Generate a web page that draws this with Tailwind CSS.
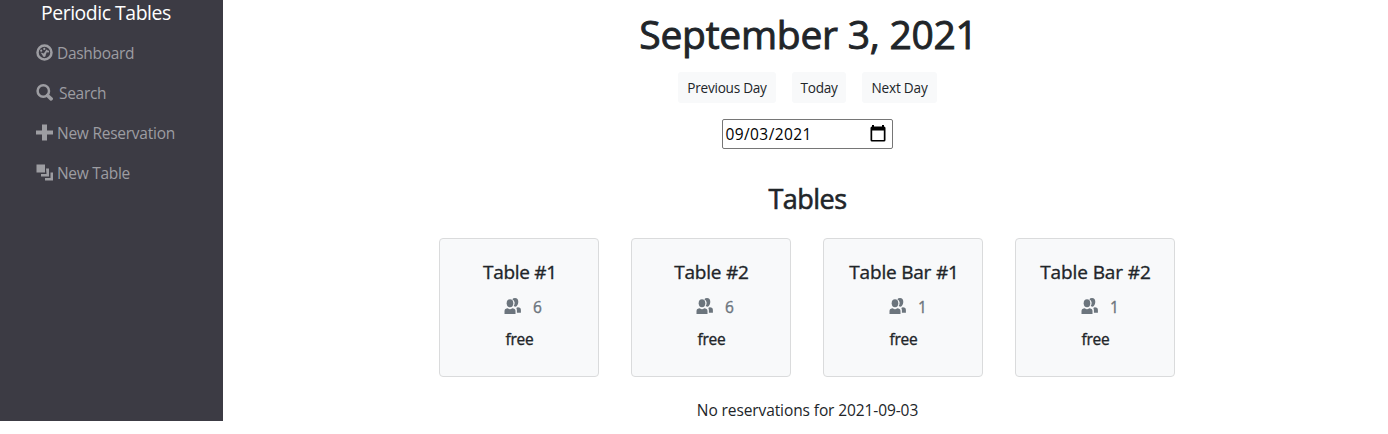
<!DOCTYPE html>
<html lang="en">
<head>
<meta charset="utf-8">
<title>Periodic Tables</title>
<script src="https://cdn.jsdelivr.net/npm/@tailwindcss/browser@4"></script>
</head>
<body class="bg-white text-[#212529] font-['Open_Sans','Noto_Sans',sans-serif] text-[15.5px] overflow-hidden">
<svg class="hidden">
  <symbol id="people" viewBox="0 0 17 16"><ellipse cx="6" cy="5.3" rx="3.3" ry="4"/><path d="M0.5 16v-3.2q0-1.800 2-2.200l1.300-.3q2.200 2 4.400 0l1.300.3q2 .4 2 2.200V16zM8.300 1.200Q9.200 0 11 0q3.300 0 3.300 4 0 2.200-1.300 3.700-.7.9-1.800 1.100L9.700 8q1.200-1.600.9-3.700-.4-2-2.300-3.100zM12.300 10l1.400-.8 1.500.4q1.700.5 1.700 2.200v3h-4v-2.400q0-1.500-.6-2.400z"/></symbol>
</svg>
<div class="flex items-start">
  <nav class="w-[223px] h-[421px] shrink-0 bg-[#3c3b44]">
    <div class="h-[33px] pl-[41px] leading-[26px] text-[19.4px] text-white whitespace-nowrap"><span class="tracking-[-0.45px]">Periodic Tables</span></div>
    <ul class="pl-[36px] text-[#9d9da2] fill-[#9d9da2]">
      <li class="h-10 flex items-center"><svg class="w-[17px] h-[17px] mr-[4px] -mt-[2px]" viewBox="0 0 17 17"><circle cx="8.500" cy="8.500" r="7" fill="none" stroke="#9d9da2" stroke-width="2.500"/><circle cx="5.200" cy="6.700" r="1.100"/><circle cx="8.300" cy="4.900" r="1.100"/><circle cx="12" cy="7.600" r="1.100"/><path d="M4.600 8.500l3.200 1 2.700-4 1.200.7-1.900 4.400q.2 2.400-1.500 2.400-1.600 0-1.800-1.700z"/></svg><span class="pt-[2px] tracking-[-0.3px]">Dashboard</span></li>
      <li class="h-10 flex items-center"><svg class="w-[17px] h-[17px] mr-[6px] -mt-[2px]" viewBox="0 0 17 17"><circle cx="7.300" cy="7" r="5.700" fill="none" stroke="#9d9da2" stroke-width="2.500"/><path d="M11.500 11.500l3.600 3.300" stroke="#9d9da2" stroke-width="3.600" stroke-linecap="round"/></svg><span class="pt-[2px] tracking-[-0.3px]">Search</span></li>
      <li class="h-10 flex items-center"><svg class="w-[17px] h-[17px] mr-[4px] -mt-[2px]" viewBox="0 0 17 17"><path d="M6 .5h5v6h6v4h-6v6H6v-6H0v-4h6z"/></svg><span class="pt-[2px] tracking-[-0.25px]">New Reservation</span></li>
      <li class="h-10 flex items-center"><svg class="w-[17px] h-[17px] mr-[4px] -mt-[2px]" viewBox="0 0 17 17"><path d="M.5.500H9v8H.5zM10 4.500h3v8H5V10h5.500zM14.500 8.500H17v8H9V14h5.500z"/></svg><span class="pt-[2px] tracking-[-0.3px]">New Table</span></li>
    </ul>
  </nav>
  <main class="w-[1168px] shrink-0 flex flex-col items-center whitespace-nowrap">
    <h1 class="mt-[10px] h-12 pl-[3px] leading-[48px] text-[39px] [-webkit-text-stroke:0.9px_#212529]"><span class="tracking-[-0.25px]">September 3, 2021</span></h1>
    <div class="mt-[14px] flex gap-4 text-[13.6px]">
      <button class="w-[98px] h-[31px] pt-[2px] pl-px rounded-[3px] bg-[#f8f9fa]"><span class="tracking-[-0.25px]">Previous Day</span></button>
      <button class="w-[54px] h-[31px] pt-[2px] pl-px rounded-[3px] bg-[#f8f9fa]"><span class="tracking-[-0.3px]">Today</span></button>
      <button class="w-[75px] h-[31px] pt-[2px] pl-px rounded-[3px] bg-[#f8f9fa]"><span class="tracking-[-0.2px]">Next Day</span></button>
    </div>
    <div class="mt-4 w-[171px] h-[30px] border border-[#767676] rounded-[2px] pl-[3px] pr-[6px] flex items-center justify-between text-black"><span class="pt-[2px] tracking-[0.4px]">09/03/2021</span><svg class="w-4 h-[17px] -mt-[2px]" viewBox="0 0 16 17"><path fill-rule="evenodd" d="M2 0h2v1.500h8V0h2v1.500q1.500 0 1.500 1.500v12q0 1.500-1.500 1.500H2Q.5 16.500.5 15V3Q.5 1.500 2 1.500zM2.200 5.500V15h11.600V5.500z"/></svg></div>
    <h2 class="mt-[33px] h-[34px] pl-px leading-[34px] text-[27px] [-webkit-text-stroke:0.6px_#212529]"><span class="tracking-[-0.5px]">Tables</span></h2>
    <div class="mt-[22px] flex gap-8 [-webkit-text-stroke:0.35px]">
      <section class="w-40 h-[139px] border border-[#dadbdc] rounded bg-[#f8f9fa] flex flex-col items-center pt-[21px]">
        <h3 class="h-6 pl-[2px] leading-6 text-[19px]"><span class="tracking-[-0.3px]">Table #1</span></h3>
        <p class="mt-3 h-5 leading-[22px] flex pl-[8px] text-[#6c757d]"><svg class="w-[17px] h-4 mr-[12px] mt-[2px] fill-[#6c757d]"><use href="#people"/></svg><span>6</span></p>
        <p class="mt-[13px] h-5 pl-px leading-5"><span class="tracking-[-0.3px]">free</span></p>
      </section>
      <section class="w-40 h-[139px] border border-[#dadbdc] rounded bg-[#f8f9fa] flex flex-col items-center pt-[21px]">
        <h3 class="h-6 pl-px leading-6 text-[19px]"><span class="tracking-[-0.2px]">Table #2</span></h3>
        <p class="mt-3 h-5 leading-[22px] flex pl-[8px] text-[#6c757d]"><svg class="w-[17px] h-4 mr-[12px] mt-[2px] fill-[#6c757d]"><use href="#people"/></svg><span>6</span></p>
        <p class="mt-[13px] h-5 pl-px leading-5"><span class="tracking-[-0.3px]">free</span></p>
      </section>
      <section class="w-40 h-[139px] border border-[#dadbdc] rounded bg-[#f8f9fa] flex flex-col items-center pt-[21px]">
        <h3 class="h-6 pl-[2px] leading-6 text-[19px]"><span class="tracking-[-0.2px]">Table Bar #1</span></h3>
        <p class="mt-3 h-5 leading-[22px] flex pl-[10px] text-[#6c757d]"><svg class="w-[17px] h-4 mr-[12px] mt-[2px] fill-[#6c757d]"><use href="#people"/></svg><span>1</span></p>
        <p class="mt-[13px] h-5 pl-px leading-5"><span class="tracking-[-0.3px]">free</span></p>
      </section>
      <section class="w-40 h-[139px] border border-[#dadbdc] rounded bg-[#f8f9fa] flex flex-col items-center pt-[21px]">
        <h3 class="h-6 pl-px leading-6 text-[19px]"><span class="tracking-[-0.1px]">Table Bar #2</span></h3>
        <p class="mt-3 h-5 leading-[22px] flex pl-[10px] text-[#6c757d]"><svg class="w-[17px] h-4 mr-[12px] mt-[2px] fill-[#6c757d]"><use href="#people"/></svg><span>1</span></p>
        <p class="mt-[13px] h-5 pl-px leading-5"><span class="tracking-[-0.3px]">free</span></p>
      </section>
    </div>
    <p class="mt-[21px] h-6 pl-px leading-6"><span class="tracking-[-0.1px]">No reservations for 2021-09-03</span></p>
  </main>
</div>
</body>
</html>
